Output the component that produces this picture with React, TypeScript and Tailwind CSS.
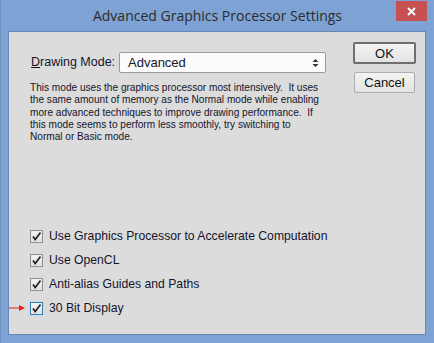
import React from 'react';

const OPTIONS = [
  'Use Graphics Processor to Accelerate Computation',
  'Use OpenCL',
  'Anti-alias Guides and Paths',
  '30 Bit Display',
];

const DESCRIPTION = [
  'This mode uses the graphics processor most intensively.\u00a0 It uses',
  'the same amount of memory as the Normal mode while enabling',
  'more advanced techniques to improve drawing performance.\u00a0 If',
  'this mode seems to perform less smoothly, try switching to',
  'Normal or Basic mode.',
];

function CheckBox({ focused }: { focused?: boolean }) {
  return (
    <div
      className={
        'w-[13px] h-[13px] flex items-center justify-center border bg-gradient-to-b from-[#f4f4f4] to-[#e2e2e2] ' +
        (focused ? 'border-[#3c7fb1] ring-1 ring-[#c5dcf0]' : 'border-[#8e8f8f]')
      }
    >
      <svg width="11" height="11" viewBox="0 0 11 11">
        <path d="M2 5.5 L4.2 8.5 L9.5 1.5" fill="none" stroke="#222" strokeWidth="1.7" />
      </svg>
    </div>
  );
}

export default function App() {
  return (
    <div
      className="w-[434px] h-[343px] bg-[#7ea2d4] border-l border-[#6f8fbf] flex flex-col"
      style={{ fontFamily: '"Liberation Sans", Arial, sans-serif' }}
    >
      {/* Title bar */}
      <div className="h-[31px] flex items-start relative">
        <div className="flex-1 text-center pt-[5px] text-[14px] text-[#2b2b2b]" style={{ fontFamily: '"Open Sans", "Noto Sans", sans-serif' }}>
          Advanced Graphics Processor Settings
        </div>
        <div className="absolute right-[7px] top-[1px] w-[31px] h-[20px] bg-[#c75050] flex items-center justify-center">
          <svg width="9" height="9" viewBox="0 0 9 9">
            <path d="M1 1 L8 8 M8 1 L1 8" stroke="#fff" strokeWidth="2" />
          </svg>
        </div>
      </div>

      {/* Client area */}
      <div className="ml-[7px] mr-[8px] mb-[8px] flex-1 bg-[#dcdcdc] border border-[#6a88b6] flex text-[#14142b]">
        <div className="flex-1 pl-[21px] pt-[20px] flex flex-col">
          <div className="flex items-center h-[21px]">
            <span className="text-[12.5px] w-[89px] pl-[1px] whitespace-nowrap">
              <span className="underline">D</span>rawing Mode:
            </span>
            <div className="w-[207px] h-[21px] bg-[#fbfbfb] border border-[#9a9a9a] rounded-[2px] flex items-center pl-[8px] pr-[6px] text-[13px]">
              <span className="flex-1">Advanced</span>
              <svg width="7" height="10" viewBox="0 0 7 10">
                <path d="M3.5 1 L6.5 4 L0.5 4 Z M3.5 9 L6.5 6 L0.5 6 Z" fill="#333" />
              </svg>
            </div>
          </div>
          <div className="mt-[9px] text-[10.1px] leading-[12.25px] whitespace-nowrap">
            {DESCRIPTION.map((l) => (
              <div key={l}>{l}</div>
            ))}
          </div>
          <div className="mt-[81px] flex flex-col">
            {OPTIONS.map((o, i) => (
              <div key={o} className="h-[24px] flex items-center relative">
                {i === 3 && (
                  <svg className="absolute left-[-21px] top-[8px]" width="17" height="8" viewBox="0 0 17 8">
                    <path d="M0 4 L12 4" stroke="#e02020" strokeWidth="1" />
                    <path d="M10 1 L16 4 L10 7 Z" fill="#e02020" />
                  </svg>
                )}
                <CheckBox focused={i === 3} />
                <span className="ml-[6px] text-[12.2px] whitespace-nowrap">{o}</span>
              </div>
            ))}
          </div>
        </div>

        <div className="w-[72px] pt-[10px] flex flex-col items-start">
          <button className="w-[63px] h-[22px] border-2 border-[#6f6f6f] rounded-[2px] bg-gradient-to-b from-[#f3f3f3] to-[#e3e3e3] text-[13px] text-[#111]">
            OK
          </button>
          <button className="mt-[8px] ml-[1px] w-[61px] h-[21px] border border-[#adadad] rounded-[2px] bg-gradient-to-b from-[#f3f3f3] to-[#e3e3e3] text-[13px] text-[#111]">
            Cancel
          </button>
        </div>
      </div>
    </div>
  );
}
